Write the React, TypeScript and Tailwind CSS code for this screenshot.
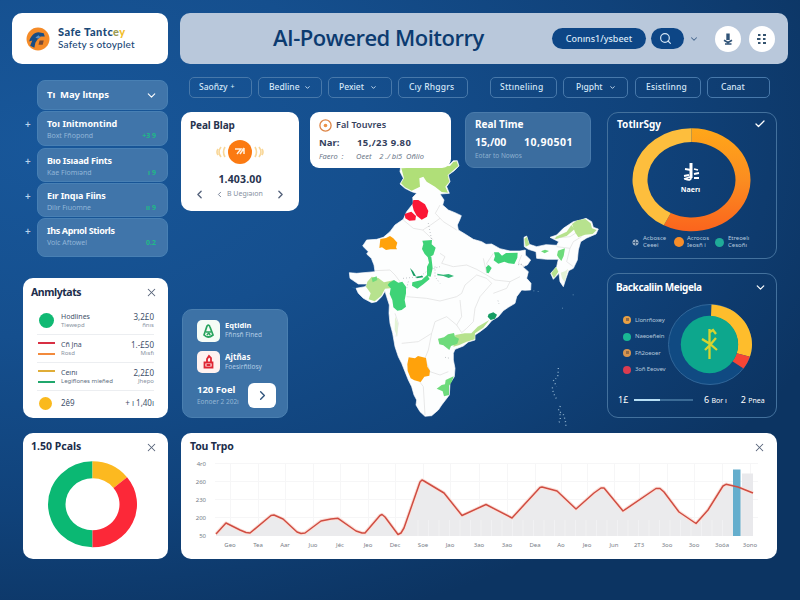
import React from "react";
import { Check, ChevronDown, ChevronLeft, ChevronRight, Search, X } from "lucide-react";

function polar(cx: number, cy: number, rx: number, ry: number, deg: number) {
  const a = ((deg - 90) * Math.PI) / 180;
  return `${(cx + rx * Math.cos(a)).toFixed(2)} ${(cy + ry * Math.sin(a)).toFixed(2)}`;
}

// Ring segment between two angles, measured clockwise from the top.
function ring(cx: number, cy: number, rx: number, ry: number, ix: number, iy: number, from: number, to: number) {
  const big = to - from > 180 ? 1 : 0;
  return `M${polar(cx, cy, rx, ry, from)} A${rx} ${ry} 0 ${big} 1 ${polar(cx, cy, rx, ry, to)} L${polar(cx, cy, ix, iy, to)} A${ix} ${iy} 0 ${big} 0 ${polar(cx, cy, ix, iy, from)}Z`;
}

const navItems = [
  { label: "Saoñzy", mark: "plus", cls: "w-[63px] pl-[9px]" },
  { label: "Bedline", mark: "down", cls: "w-[64px] pl-[10px] ml-[6px]" },
  { label: "Pexiet", mark: "down", cls: "w-[64px] pl-[10px] ml-[6px] gap-[2px]" },
  { label: "Cıy Rhggrs", mark: "", cls: "w-[70px] pl-[10px] ml-[6px] tracking-[0.2px]" },
  { label: "Sttıneliing", mark: "", cls: "w-[67px] pl-[9px] ml-[22px] tracking-[0.2px]" },
  { label: "Pıgpht", mark: "down", cls: "w-[65px] pl-[12px] ml-[6px] gap-[2px]" },
  { label: "Esistlinng", mark: "", cls: "w-[66px] pl-[10px] ml-[7px] tracking-[0.2px]" },
  { label: "Canat", mark: "", cls: "w-[63px] pl-[13px] ml-[6px]" },
];

const menuItems = [
  { title: "Toı Initmontind", sub: "Boxt Fñopond", tag: "+3 9", cls: "h-[35px] mt-px tracking-[0.05px]" },
  { title: "Bıo Isıaad Fints", sub: "Kae Fiomıənd", tag: "ı 9", cls: "h-[34px] mt-[2px] tracking-[-0.2px]" },
  { title: "Eır Inqıa Fiins", sub: "Dilır Fıuomne", tag: "ıı 9", cls: "h-[34px] mt-px tracking-[-0.1px]" },
  { title: "Ihs Aprıol Stiorls", sub: "Volc Aftowel", tag: "0.2", cls: "h-[39px] mt-px tracking-[-0.35px]" },
];

function Header() {
  return (
    <header className="flex h-[51px] gap-[12px]">
      <div className="flex w-[156px] items-center rounded-[10px] bg-white pl-[14px]">
        <svg width="24" height="24" viewBox="0 0 23 23">
          <circle cx="11.5" cy="11.5" r="11" fill="#f58b28" />
          <path d="M3 14 C4 9 8 5 12 5 L17 6 L18 9 L14 9 L11 12 L9 15 L8 20 L4 18 L6 13Z" fill="#174d85" />
          <path d="M13 13h4l-1 4h-4z" fill="#7a4b36" />
          <path d="M9 10l3-2 2 2-3 1z" fill="#5b92c8" />
        </svg>
        <div className="ml-[8px] mt-[-2px] font-['Lato','Noto_Sans',sans-serif] text-[#1a4978]">
          <div className="whitespace-nowrap text-[11px] font-black leading-[13px] tracking-[0.5px]">
            Safe Tantc<span className="text-[#9b9c55]">e</span><span className="text-[#f2be2a]">y</span>
          </div>
          <div className="whitespace-nowrap text-[10px] font-medium leading-[12px] tracking-[0.18px]">Safety s otoyplet</div>
        </div>
      </div>
      <div className="flex w-[608px] items-center rounded-[10px] bg-[#b9c8db]">
        <h1 className="ml-[93px] mt-[-4px] w-[215px] whitespace-nowrap font-['Open_Sans','Noto_Sans',sans-serif] text-[22px] font-semibold leading-[28px] tracking-[-0.5px] text-[#0c3b70]">
          AI-Powered Moitorry
        </h1>
        <div className="ml-[64px] flex h-[21px] w-[94px] items-center justify-center whitespace-nowrap rounded-full bg-[#0d4686] text-[9px] font-medium text-[#d9e8f7]">
          Conıns1/ysbeet
        </div>
        <div className="ml-[5px] flex h-[21px] w-[33px] items-center justify-center rounded-full bg-[#0d4686] pr-[4px]">
          <Search size={13} strokeWidth={2.2} className="text-[#d5e6f5]" />
        </div>
        <ChevronDown size={10} strokeWidth={2.5} className="ml-[5px] text-[#46678e]" />
        <div className="ml-[16px] flex h-[26px] w-[26px] items-center justify-center rounded-full bg-white">
          <svg width="12" height="14" viewBox="0 0 12 14" fill="none" stroke="#305377">
            <path d="M6 1.5V8" strokeWidth="3.4" />
            <path d="M2 8.2 L6 10.5 L10 8.2 M3 12h6.5" strokeWidth="1.7" />
          </svg>
        </div>
        <div className="ml-[8px] flex h-[26px] w-[26px] items-center justify-center rounded-full bg-white">
          <svg width="10" height="12" viewBox="0 0 10 12" fill="#34536f">
            <rect x="1" y="1" width="2.5" height="2" /><rect x="6" y="1" width="3" height="2" />
            <rect x="0" y="5" width="3.5" height="2" /><rect x="6" y="5" width="2.5" height="2" />
            <rect x="1" y="9" width="2.5" height="2" /><rect x="6" y="9" width="3" height="2" />
          </svg>
        </div>
      </div>
    </header>
  );
}

function SideMenu() {
  return (
    <div className="flex flex-col">
      <div className="ml-[14px] flex h-[30px] w-[131px] items-center rounded-[8px] border border-[#4880b4] bg-[#4075aa] pl-[9px] pr-[9px] text-white">
        <span className="whitespace-pre text-[9.5px] font-bold tracking-[-0.05px]">Tı  May lıtnps</span>
        <ChevronDown size={13} strokeWidth={2} className="ml-auto" />
      </div>
      {menuItems.map((m) => (
        <div key={m.title} className={"flex items-stretch " + m.cls}>
          <span className="w-[14px] pl-[2px] pt-[6px] text-[10px] font-semibold leading-[14px] text-[#b9d5ee]">+</span>
          <div className="w-[131px] rounded-[8px] border border-[#4880b4] bg-[#4075aa] px-[9px] pt-[6px]">
            <div className="whitespace-nowrap text-[9px] font-bold leading-[12px] text-white">{m.title}</div>
            <div className="flex justify-between whitespace-nowrap text-[7px] leading-[11px] tracking-normal text-[#92b6d8]">
              <span>{m.sub}</span>
              <span className="pr-[2px] font-bold text-[#20b987]">{m.tag}</span>
            </div>
          </div>
        </div>
      ))}
    </div>
  );
}

const analytics = [
  { a: "Hodlines", b: "Tiewepd", v: "3,2£0", w: "ñnıs" },
  { a: "Cñ Jna", b: "Rosd", v: "1.-£50", w: "Mısfı" },
  { a: "Ceını", b: "Legiflones mieñed", v: "2,2£0", w: "Jhepo" },
];

function Analytics() {
  return (
    <section className="flex h-[140px] w-[145px] flex-col rounded-[10px] bg-white text-[#42516b]">
      <div className="flex h-[29px] items-center justify-between pl-[8px] pr-[10px]">
        <h2 className="whitespace-nowrap text-[10.5px] font-bold tracking-[-0.45px] text-[#202d4b]">Anmlytats</h2>
        <X size={13} strokeWidth={1.9} className="text-[#57637a]" />
      </div>
      {analytics.map((r, i) => (
        <div key={r.a} className="mx-[14px] flex h-[28px] items-center border-b border-[#eceef1]">
          <div className="w-[24px]">
            {i === 0 && <div className="ml-[2px] h-[15px] w-[15px] rounded-full bg-[#10b973]" />}
            {i === 1 && <div className="w-[18px] pl-px"><div className="h-[2px] bg-[#d82f43]" /><div className="mt-[9px] h-[2px] bg-[#f28a3c]" /></div>}
            {i === 2 && <div className="w-[18px] pl-px"><div className="h-[2px] bg-[#e0ad37]" /><div className="mt-[9px] h-[2px] bg-[#20a76c]" /></div>}
          </div>
          <div className="whitespace-nowrap text-[7px] leading-[9px]">
            <div>{r.a}</div>
            <div className={"text-[6px] " + (i === 2 ? "text-[#616e80]" : "text-[#8993a2]")}>{r.b}</div>
          </div>
          <div className="ml-auto whitespace-nowrap text-right text-[8px] leading-[9px]">
            <div>{r.v}</div>
            <div className="text-[6px] text-[#8993a2]">{r.w}</div>
          </div>
        </div>
      ))}
      <div className="mx-[14px] flex h-[24px] items-center text-[8px]">
        <div className="ml-[2px] mr-[9px] h-[13px] w-[13px] rounded-full bg-[#fab91d]" />
        <span>2ê9</span>
        <span className="ml-auto">+ ı 1,40ı</span>
      </div>
    </section>
  );
}

function IndiaMap() {
  return (
    <svg className="absolute left-[159px] top-[38px]" width="270" height="280" viewBox="0 0 810 840">
      <g fill="#fdfefe" stroke="#fff" strokeWidth="2" strokeLinejoin="round">
        <path d="M182 50 L330 42 340 32 352 32 357 48 343 62 325 75 330 95 320 110 328 130 300 132 312 150 308 165 325 180 345 188 364 197 359 210 352 225 355 240 375 252 400 268 425 275 438 283 455 282 480 296 510 303 540 303 556 300 556 315 572 330 562 345 548 350 565 365 560 385 573 400 572 420 555 421 545 420 530 440 525 460 505 472 490 482 475 500 455 512 440 530 420 545 405 555 405 570 385 576 370 588 345 598 340 610 340 630 345 655 343 680 330 700 328 735 305 765 295 780 275 797 255 799 240 785 228 765 230 750 222 735 215 710 205 690 195 665 185 640 175 620 165 590 158 550 150 520 147 490 148 465 140 440 135 424 125 440 110 455 95 458 70 445 55 430 48 415 75 410 82 402 55 402 30 385 28 368 50 370 105 365 102 345 94 325 80 312 85 305 68 288 80 270 110 268 130 262 150 245 165 225 190 208 200 185 220 160 218 142 230 130 215 125 195 115 180 102 190 85 180 65Z" />
        <path d="M552 262 L560 258 568 283 590 290 618 284 650 286 656 275 630 262 650 255 670 235 700 215 722 210 738 205 755 215 760 232 775 237 768 252 740 264 722 275 715 300 712 330 700 355 686 362 678 385 670 410 660 395 657 370 640 388 632 370 650 350 655 328 620 328 590 325 588 305 565 298 553 290Z" />
      </g>
      <g fill="none" stroke="#dcdcdd" strokeWidth="2" strokeLinejoin="round">
        <path d="M190 210 L220 235 248 240 272 225 300 205 M248 240 L280 270 M300 165 L286 190 310 215 350 240 M105 362 L150 360 165 375 180 395 M200 440 L260 445 300 453 350 440 365 430 375 405 410 375 440 385 455 400" />
        <path d="M300 310 L315 320 305 340 340 350 380 345 410 358 440 375 465 390 510 395 540 380 M455 400 L420 440 405 475 400 515 380 535 365 548 350 525 365 500 360 450 M350 525 L320 500 285 515 275 550 235 575 185 580 M275 550 L265 600 255 625 270 665 300 675 325 665 M228 680 L250 710 255 795 M430 325 L440 370 M460 310 L440 340 450 365 M510 395 L500 415 460 430" />
        <path d="M165 490 L175 520 168 560 M545 315 L535 340 555 350 M640 265 L690 260 722 240 M650 290 L690 295 700 275 725 260 M690 295 L680 335 700 350" />
      </g>
      <path fill="#b0df78" d="M184 55 L330 48 340 36 350 34 355 48 341 60 323 75 328 95 316 110 324 128 305 126 285 110 260 95 250 80 238 85 240 110 215 122 195 112 183 100 192 85Z" />
      <g fill="#b7e28e">
        <path d="M82 395 L95 380 115 384 132 397 160 391 158 414 135 416 124 437 104 454 86 448 92 430 78 410Z" />
        <path d="M346 555 L374 550 394 550 413 530 448 510 430 533 405 550 404 568 380 575 358 585 340 590Z" />
        <path d="M696 222 L712 211 736 207 752 220 756 235 770 240 758 252 735 254 715 262 705 247Z" />
        <path d="M553 266 L561 260 568 284 557 290Z M648 260 L680 245 694 225 704 237 680 258 645 268Z M648 350 L655 365 642 384 634 370Z" />
        <path fill="#e3f3d6" d="M662 368 L676 363 684 356 674 396 666 385Z M165 500 L174 520 172 560 164 540Z" />
      </g>
      <g fill="#3fd377">
        <path d="M148 398 L162 390 175 398 187 395 198 410 198 430 194 450 198 470 185 480 172 482 160 472 157 450 149 432 152 415 143 405Z" />
        <path d="M247 272 L276 270 275 283 287 293 280 315 265 323 254 312 246 297 250 282Z M263 320 L274 320 278 355 272 380 261 378 261 350 267 338Z M217 397 L245 390 261 375 269 387 251 402 232 416 216 407Z" />
        <path d="M462 307 L476 307 486 317 498 309 533 308 532 323 523 342 505 340 493 335 475 341 461 331 465 319Z M438 352 L446 345 455 354 446 370 440 368Z" />
      </g>
      <g fill="#169d63">
        <path d="M210 354 L219 363 228 379 220 377Z M446 492 L460 487 471 494 465 506 452 510 443 500Z M228 380 L247 377 250 382 230 385Z" />
        <path fill="#35b878" d="M292 371 L310 374 326 372 342 378 326 384 310 378 292 376Z" />
      </g>
      <g fill="#6edb7b">
        <path d="M294 566 L312 562 324 553 342 549 345 560 357 566 352 581 333 588 328 600 310 586 298 583Z M317 690 L341 679 335 696 327 707 327 735 312 739 308 724 290 716 305 705 315 703Z" />
        <path d="M654 302 L675 295 671 318 664 333 656 323 651 316Z M603 304 L615 299 627 303 614 310Z M95 385 L110 379 112 390 98 397Z" />
      </g>
      <g fill="#ffa20b">
        <path d="M121 267 L138 264 150 258 160 265 172 278 168 292 171 298 151 298 138 300 126 292 118 294Z" />
        <path d="M206 622 L225 625 234 618 258 624 262 650 270 662 268 677 253 680 242 696 223 691 212 685 203 663 202 643Z" />
      </g>
      <g fill="#fb1736">
        <path d="M220 150 L235 150 255 163 265 183 261 200 245 209 230 197 221 181 217 164Z M194 192 L204 188 214 185 228 198 226 211 208 212 196 205Z" />
      </g>
      <g fill="none" stroke="#77808a" strokeWidth="2" strokeDasharray="2 7">
        <path d="M190 385 L240 380 265 360 300 350 M285 350 L285 380 300 400 M205 395 L200 415 M265 220 L275 270 M315 622 L330 625 M535 344 L552 342 M474 452 L477 462" />
      </g>
      <g fill="none" stroke="#8eb0cc" strokeWidth="4" strokeDasharray="3 8">
        <path d="M655 654 L654 676 647 687 M640 690 L650 710 M637 712 L640 729 651 750 M661 768 L655 782 671 795 676 812 678 830 M660 793 L661 809 655 822" />
      </g>
      <path fill="#1d5b94" d="M33 410 L47 412 44 418Z" />
      <g fill="#5a88b0"><rect x="580" y="421" width="3" height="3" /><rect x="593" y="423" width="3" height="3" /><rect x="698" y="433" width="3" height="3" /><rect x="666" y="473" width="3" height="3" /></g>
    </svg>
  );
}

function RealMap() {
  return (
    <section className="flex h-[99px] w-[118px] flex-col rounded-[10px] bg-white pt-[5px] text-[#27344f]">
      <h2 className="pl-[9px] text-[10px] font-bold leading-[16px] tracking-[-0.1px]">Peal Blap</h2>
      <div className="mt-[6px] flex justify-center">
        <svg width="48" height="26" viewBox="0 0 48 26">
          <circle cx="24" cy="13" r="12" fill="#fb7a12" />
          <path d="M19 10h6l-4 5M24 15l4-6M28 9v6" fill="none" stroke="#fff0df" strokeWidth="1.5" />
          <path d="M9 8q-3 5 0 10M5 8q-4 5 0 10M2 10q-2 3 0 6M39 8q3 5 0 10M43 8q4 5 0 10M46 10q2 3 0 6" fill="none" stroke="#f9d798" strokeWidth="1.6" />
        </svg>
      </div>
      <div className="mt-[6px] text-center text-[10.5px] font-bold leading-[16px] tracking-[0.15px]">1.403.00</div>
      <div className="mt-px flex items-center px-[12px] text-[#54627b]">
        <ChevronLeft size={13} strokeWidth={2.5} className="shrink-0" />
        <ChevronLeft size={9} strokeWidth={2} className="ml-[9px] shrink-0" />
        <span className="ml-[3px] whitespace-nowrap text-[7px] text-[#8690a0]">B Uegıəıon</span>
        <ChevronRight size={13} strokeWidth={2.5} className="ml-auto shrink-0" />
      </div>
    </section>
  );
}

function QuickCard() {
  return (
    <section className="ml-px mt-[98px] flex h-[109px] w-[106px] flex-col rounded-[10px] border border-[#4a7fb0] bg-[#3d72a6] pl-[14px] pt-[10px] text-white">
      <div className="flex h-[31px]">
        <span className="flex h-[22px] w-[23px] items-center justify-center rounded-[5px] bg-[#f5fcf6]">
          <svg width="13" height="16" viewBox="0 0 13 16" fill="none" stroke="#28a45e" strokeWidth="1.7">
            <path d="M2 12 L5 3 Q7 1 8 4 L11 12 Q6 16 2 12Z M4 9h5M5 12q2-3 3 0" />
          </svg>
        </span>
        <div className="ml-[5px] whitespace-nowrap leading-[10px]"><div className="text-[7.5px] font-bold">Eqtidin</div><div className="text-[6.5px] text-[#b3cde5]">Fñnsñ Fined</div></div>
      </div>
      <div className="flex h-[32px]">
        <span className="flex h-[22px] w-[23px] items-center justify-center rounded-[5px] bg-[#fff2f0]">
          <svg width="13" height="16" viewBox="0 0 13 16" fill="none" stroke="#df2634" strokeWidth="1.8">
            <path d="M2.5 13.5V8.500h8v5zM5 8.500V5l2-3 2 2v4M4.500 11h4" />
          </svg>
        </span>
        <div className="ml-[5px] mt-px whitespace-nowrap leading-[10px]"><div className="text-[8px] font-bold">Ajtñas</div><div className="text-[6.5px] text-[#b3cde5]">Foesirñtlosy</div></div>
      </div>
      <div className="flex">
        <div className="mt-px w-[51px] whitespace-nowrap leading-[12px]"><div className="text-[9.5px] font-bold">120 Foel</div><div className="text-[6.5px] text-[#94b7d5]">Eonoer 2 202ı</div></div>
        <span className="flex h-[25px] w-[28px] items-center justify-center rounded-[6px] bg-white text-[#30547c]"><ChevronRight size={15} strokeWidth={2.2} /></span>
      </div>
    </section>
  );
}

function TopCards() {
  return (
    <div className="relative ml-[11px] flex h-[56px]">
      <section className="h-[56px] w-[141px] rounded-[9px] bg-white pl-[9px] pt-[5px] text-[#34415d]">
        <div className="flex items-center whitespace-nowrap text-[9px] font-semibold leading-[16px] tracking-[0.1px]">
          <svg width="13" height="13" viewBox="0 0 13 13" className="mr-[4px]"><circle cx="6.5" cy="6.5" r="5.6" fill="none" stroke="#dd8546" strokeWidth="1.3" /><circle cx="6.5" cy="6.5" r="1.8" fill="#ec9247" /></svg>
          Fal Touvres
        </div>
        <div className="mt-[3px] flex whitespace-nowrap text-[9.5px] font-bold leading-[14px]"><span className="w-[38px]">Nar:</span><span className="tracking-[0.4px]">15,/23 9.80</span></div>
        <div className="flex whitespace-pre text-[7.5px] italic leading-[13px] text-[#6c7789]"><span className="w-[37px]">Faero  :</span><span>Oeet    2 ./ bi5  Oñlio</span></div>
      </section>
      <section className="ml-[14px] h-[56px] w-[126px] rounded-[9px] border border-[#4a7bab] bg-[#3b6d9f] pl-[9px] pt-[4px] text-white">
        <div className="text-[10px] font-bold leading-[15px]">Real Time</div>
        <div className="mt-[3px] flex whitespace-nowrap text-[10.5px] font-bold leading-[15px]"><span className="w-[49px]">15,/00</span><span className="tracking-[0.5px]">10,90501</span></div>
        <div className="mt-px text-[6.5px] leading-[10px] text-[#8eb1d0]">Eotar to Nowos</div>
      </section>
    </div>
  );
}

function Torus() {
  return (
    <section className="relative h-[147px] w-[170px] rounded-[11px] border border-[#43719d] text-white">
      <svg className="absolute left-[22px] top-[14px]" width="124" height="106" viewBox="0 0 124 106">
        <defs><linearGradient id="orange" x1="0" y1="0" x2="0" y2="1"><stop offset="0" stopColor="#ffa719" /><stop offset="0.5" stopColor="#fb8d20" /><stop offset="1" stopColor="#fb641d" /></linearGradient></defs>
        <path d={ring(61.5, 52.8, 59, 51.5, 44, 37.7, 0, 208)} fill="url(#orange)" />
        <path d={ring(61.5, 52.8, 59, 51.5, 44, 37.7, 208, 360)} fill="#fdbe3d" />
        <g fill="none" stroke="#fff"><path d="M61 36v15q0 3-6 1M55 42l6 1 M54 49l5-1M64 42l4 1M64 47l5-1M64 51h5M54 52l6-2" strokeWidth="1.8" /><path d="M61 36v15" strokeWidth="3" /></g>
      </svg>
      <div className="flex h-[22px] items-center justify-between pl-[9px] pr-[10px]">
        <h2 className="text-[10px] font-bold tracking-[0.05px]">TotlırSgy</h2>
        <Check size={12} strokeWidth={2.5} />
      </div>
      <div className="mt-[48px] pr-[3px] text-center text-[7px] font-bold leading-[14px]">Naerı</div>
      <div className="mt-[38px] flex pl-[24px] text-[6px] leading-[7px] text-[#b7cadf]">
        <div className="flex w-[42px] items-center"><svg width="7" height="7" viewBox="0 0 7 7"><circle cx="3.5" cy="3.5" r="3" fill="#9bb0c6" /><path d="M1 3.5h5M3.5 1v5" stroke="#405f84" /></svg><div className="ml-[4px]">Acbosce<br />Ceeei</div></div>
        <div className="flex w-[41px] items-center"><span className="h-[10px] w-[10px] shrink-0 rounded-full bg-[#f78d29]" /><div className="ml-[3px]">Acrocos<br />Ieosñ i</div></div>
        <div className="flex items-center"><span className="h-[9px] w-[9px] shrink-0 rounded-full bg-[#20ab98]" /><div className="ml-[4px]">Etreoelı<br />Cesoñı</div></div>
      </div>
    </section>
  );
}

const blockLegend = [
  { t: "Llonrñoxey", c: "bg-[#e9a044]" },
  { t: "Naeoeñein", c: "bg-[#19b894]" },
  { t: "Fñ2oeoer", c: "bg-[#d8954f]" },
  { t: "3oñ Eeovev", c: "bg-[#da3c50]" },
];

function Blockchain() {
  return (
    <section className="mt-[14px] flex h-[145px] w-[170px] flex-col rounded-[11px] border border-[#43719d] text-white">
      <div className="flex h-[27px] items-center justify-between pl-[8px] pr-[9px]">
        <h2 className="whitespace-nowrap text-[10px] font-bold tracking-[-0.4px]">Backcaliin Meigela</h2>
        <ChevronDown size={13} strokeWidth={2.2} />
      </div>
      <div className="flex h-[86px]">
        <div className="w-[57px] pl-[15px] pt-[11px]">
          {blockLegend.map((b, i) => (
            <div key={b.t} className="flex h-[16.5px] items-center whitespace-nowrap text-[6px] tracking-[-0.15px] text-[#b4c7da]">
              <span className={"mr-[4px] h-[8px] w-[8px] shrink-0 rounded-full " + b.c}>{(i === 0 || i === 2) && <span className="ml-[3px] mt-[2px] block h-[3px] w-[3px] bg-[#946c46]" />}</span>{b.t}
            </div>
          ))}
        </div>
        <svg className="ml-[2px]" width="88" height="86" viewBox="0 0 88 86">
          <ellipse cx="43" cy="43.5" rx="41.5" ry="40" fill="#104a82" stroke="#31679a" strokeWidth="1" />
          <path d={ring(43, 43.5, 42, 40, 28, 28, 2, 108)} fill="#febd2c" />
          <path d={ring(43, 43.5, 42, 40, 28, 28, 108, 127)} fill="#f64535" />
          <circle cx="42.5" cy="43.5" r="28.7" fill="#0da78d" />
          <path d="M42.5 28v30M43 31l3-2 3 4M35 38l8 5 7 6M38 49l5-5 6-7" fill="none" stroke="#d6d330" strokeWidth="2.3" />
        </svg>
      </div>
      <div className="flex h-[26px] items-center whitespace-nowrap pl-[10px] text-[9px]">
        <span className="w-[16px]">1£</span>
        <span className="flex h-[2px] w-[59px] bg-[#3b6b96]"><span className="h-[2px] w-[26px] bg-[#b7dff5]" /></span>
        <span className="ml-[11px]">6 <span className="text-[7px]">Bor ı</span></span>
        <span className="ml-[14px]">2 <span className="text-[7px]">Pnea</span></span>
      </div>
    </section>
  );
}

function Peaks() {
  return (
    <section className="h-[126px] w-[145px] rounded-[10px] bg-white">
      <div className="flex h-[28px] items-center justify-between pl-[8px] pr-[10px]">
        <h2 className="whitespace-nowrap text-[10.5px] font-bold text-[#202d4b]">1.50 Pcals</h2>
        <X size={13} strokeWidth={1.9} className="text-[#57637a]" />
      </div>
      <svg className="ml-[24px]" width="92" height="88" viewBox="0 0 92 88">
        <path d={ring(45.5, 43.3, 44.5, 43, 27, 26, 180, 360)} fill="#0bb873" />
        <path d={ring(45.5, 43.3, 44.5, 43, 27, 26, 0, 51)} fill="#fcb920" />
        <path d={ring(45.5, 43.3, 44.5, 43, 27, 26, 51, 180)} fill="#fc2838" />
      </svg>
    </section>
  );
}

const line = "216,534 226,523 240,530 246,532.5 250,533 271,515.5 274,515 283,519 297,532 301,533.5 305,533 321,521 331,519 338,518.3 356,531 362,533 365,533 380,515.5 382,514.5 385,517 398,534.5 401,533 404,528 420,482 422,480 424,481 444,493 462,515.5 486,504.5 512,518 540,487.5 542,487 557,491 576,509 594,493 601,488 604,488 623,511 656,488.5 660,488.5 664,492 679,512 696,523.5 708,510 723,486 726,484.3 738,487 753,493";
const xLabels: [number, string][] = [[230, "Geo"], [258, "Tea"], [285, "Aar"], [313, "Juo"], [340, "Jéc"], [368, "Jeo"], [395, "Dec"], [423, "Soe"], [450, "Jao"], [479, "3ao"], [507, "3ao"], [535, "Dea"], [561, "Ao"], [587, "Jeo"], [614, "Jun"], [639, "2T3"], [667, "3oo"], [694, "3oo"], [722, "3oóa"], [750, "3ono"]];

function TourChart() {
  return (
    <section className="h-[126px] w-[596px] rounded-[10px] bg-white">
      <div className="flex h-[28px] items-center justify-between pl-[9px] pr-[11px]">
        <h2 className="text-[10.5px] font-bold tracking-[-0.15px] text-[#202d4b]">Tou Trpo</h2>
        <X size={13} strokeWidth={1.9} className="text-[#57637a]" />
      </div>
      <svg width="596" height="96" viewBox="181 461 596 96" fontSize="6" fill="#777d87">
        <g stroke="#f6f6f7" strokeWidth="1">
          {[463.5, 481.5, 499.5, 517.5].map((y) => <path key={y} d={`M215 ${y}H758`} />)}
          {xLabels.map(([x]) => <path key={x} d={`M${x + 0.5} 463V536`} />)}
        </g>
        <polygon points={`216,536 ${line} 753,536`} fill="#ebebed" />
        <g stroke="#f3f3f4" strokeWidth="0.8">
          {Array.from({ length: 30 }, (_, i) => 418 + i * 10.5).map((x) => <path key={x} d={`M${x} 520V536`} />)}
        </g>
        <rect x="742" y="473.5" width="11" height="62.5" fill="#e9e9ec" />
        <polyline points={line} fill="none" stroke="#fbe0da" strokeWidth="3.5" strokeLinejoin="round" />
        <rect x="733" y="469.5" width="7.5" height="66.5" fill="#65aecd" />
        <polyline points={line} fill="none" stroke="#cf4d42" strokeWidth="1.5" strokeLinejoin="round" />
        {["4r0", "260", "230", "200", "50"].map((t, i) => <text key={t} x="206" y={466 + i * 18} textAnchor="end">{t}</text>)}
        {xLabels.map(([x, t]) => <text key={x} x={x} y="547" textAnchor="middle">{t}</text>)}
      </svg>
    </section>
  );
}

export default function App() {
  return (
    <main className="h-[600px] w-[800px] overflow-hidden bg-[radial-gradient(ellipse_105%_85%_at_6%_24%,#18579a_0%,#154f8e_38%,#10427a_72%,#0c3462_100%)] pl-[12px] pt-[13px] font-['Noto_Sans','Open_Sans',sans-serif]">
      <Header />
      <div className="ml-[11px] flex gap-[13px]">
        <aside className="w-[145px] pt-[16px]">
          <SideMenu />
          <div className="mt-[21px]"><Analytics /></div>
          <div className="mt-[15px]"><Peaks /></div>
        </aside>
        <div className="w-[596px] pt-[13px]">
          <nav className="flex h-[21px] pl-[8px] text-[8.5px] font-medium text-[#d5e7f8]">
            {navItems.map((n) => (
              <div key={n.label} className={"flex items-center whitespace-nowrap rounded-[5px] border border-[#4778aa] " + n.cls}>
                {n.label}
                {n.mark === "plus" && <span className="ml-[3px] text-[7px]">+</span>}
                {n.mark === "down" && <ChevronDown size={7} strokeWidth={3} className="ml-[4px]" />}
              </div>
            ))}
          </nav>
          <div className="relative mt-[14px] flex h-[306px]">
            <IndiaMap />
            <div className="relative w-[118px]"><RealMap /><QuickCard /></div>
            <TopCards />
            <div className="relative ml-auto w-[170px]"><Torus /><Blockchain /></div>
          </div>
          <div className="mt-[15px]"><TourChart /></div>
        </div>
      </div>
    </main>
  );
}
